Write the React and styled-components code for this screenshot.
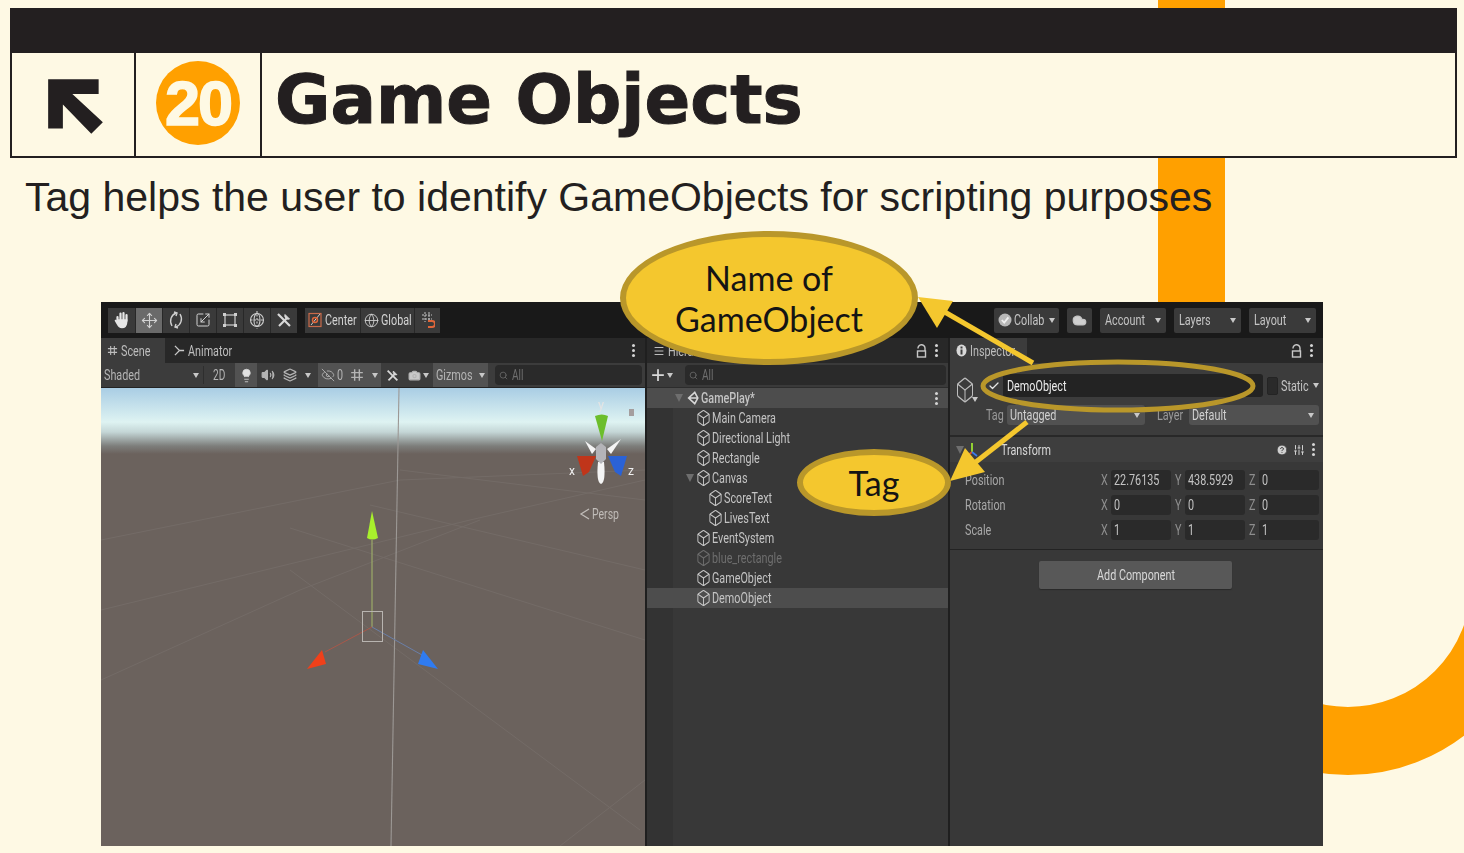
import React from "react";
import styled, { createGlobalStyle } from "styled-components";
import { Box, Camera, Check, Cloud, EyeOff, Globe, CircleHelp, Layers, Lightbulb, Menu, Move, Scaling, Search, SlidersVertical, Volume2 } from "lucide-react";

const GlobalStyle = createGlobalStyle`
  html, body {
    margin: 0;
    padding: 0;
    background: #fef9e4;
  }
`;

const uiFont = `Roboto, "Liberation Sans", sans-serif`;

const Page = styled.div`
  position: relative;
  width: 1464px;
  height: 853px;
  overflow: hidden;
  padding-top: 8px;
  box-sizing: border-box;
  background: #fef9e4;
  font-family: "Liberation Sans", Arial, sans-serif;
`;

const OrangeStrip = styled.div`
  position: absolute;
  left: 1158px;
  top: 0;
  width: 67px;
  height: 310px;
  background: #ffa000;
`;

const OrangeArc = styled.div`
  position: absolute;
  left: 1157px;
  top: 393px;
  width: 382px;
  height: 382px;
  box-sizing: border-box;
  border: 68px solid #ffa000;
  border-radius: 50%;
  clip-path: inset(50% 0 0 0);
`;

const Header = styled.header`
  position: relative;
  margin: 0 7px 0 10px;
  height: 150px;
  box-sizing: border-box;
  border: 2px solid #231f20;
  background: #fef9e4;
  display: flex;
  flex-direction: column;
`;

const HeaderBar = styled.div`
  height: 43px;
  flex: none;
  background: #231f20;
`;

const HeaderRow = styled.div`
  flex: 1;
  display: flex;
`;

const HeaderCell = styled.div`
  width: ${(p) => p.$w}px;
  flex: none;
  box-sizing: border-box;
  border-right: 2px solid #231f20;
  padding: ${(p) => p.$pad ?? "0 0 3px 0"};
  display: flex;
  align-items: center;
  justify-content: center;
`;

const NumberBadge = styled.div`
  width: 84px;
  height: 84px;
  border-radius: 50%;
  background: #ffa000;
  color: #fef9e4;
  font-size: 63px;
  font-weight: 700;
  letter-spacing: -2px;
  -webkit-text-stroke: 1.5px #fef9e4;
  display: flex;
  align-items: center;
  justify-content: center;
`;

const Title = styled.h1`
  margin: 3px 0 0 13px;
  font-family: "DejaVu Sans", sans-serif;
  font-size: 67.5px;
  line-height: 88px;
  font-weight: 700;
  color: #231f20;
  -webkit-text-stroke: 1px #231f20;
`;

const Subtitle = styled.p`
  position: relative;
  margin: 15px 0 0 25px;
  font-size: 41px;
  line-height: 48px;
  color: #231f20;
`;

const Editor = styled.section`
  position: relative;
  margin: 81px 0 0 101px;
  width: 1222px;
  height: 544px;
  background: #383838;
  display: flex;
  flex-direction: column;
  font-family: ${uiFont};
  font-size: 15px;
  color: #c4c4c4;
  filter: blur(0.45px);
  & svg {
    flex: none;
  }
`;

// the editor capture is squeezed sideways, no narrow font is installed so the
// labels are narrowed here. $w is the width they take in the row afterwards
const Label = styled.span`
  display: inline-block;
  flex: none;
  white-space: nowrap;
  width: ${(p) => (p.$w ? `${p.$w}px` : "auto")};
  transform: scaleX(0.72);
  transform-origin: left center;
`;

const Toolbar = styled.div`
  height: 36px;
  flex: none;
  background: #191919;
  display: flex;
  align-items: center;
  padding: 0 7px;
  box-sizing: border-box;
`;

const ToolGroup = styled.div`
  display: flex;
  margin-right: ${(p) => p.$gap ?? 8}px;
`;

const ToolButton = styled.div`
  width: ${(p) => p.$w ?? 27}px;
  height: 25px;
  box-sizing: border-box;
  background: ${(p) => (p.$on ? "#6a6a6a" : "#3a3a3a")};
  color: #d2d2d2;
  display: flex;
  align-items: center;
  justify-content: center;
  gap: 2px;
  font-size: 15px;
  & + & {
    border-left: 1px solid #282828;
  }
`;

const ToolbarRight = styled.div`
  margin-left: auto;
  display: flex;
  gap: 8px;
`;

const MenuButton = styled.div`
  width: ${(p) => p.$w}px;
  height: 25px;
  box-sizing: border-box;
  background: #3a3a3a;
  border-radius: 2px;
  padding: 0 5px;
  display: flex;
  align-items: center;
  justify-content: ${(p) => (p.$center ? "center" : "space-between")};
  gap: 2px;
  color: #c4c4c4;
`;

const Columns = styled.div`
  flex: 1;
  display: flex;
  min-height: 0;
`;

const Column = styled.div`
  width: ${(p) => p.$w}px;
  flex: none;
  display: flex;
  flex-direction: column;
  box-sizing: border-box;
  border-left: ${(p) => (p.$line ? "2px solid #1f1f1f" : "none")};
`;

const TabRow = styled.div`
  height: 25px;
  flex: none;
  background: #282828;
  display: flex;
  align-items: stretch;
  color: #bdbdbd;
  padding-right: 8px;
`;

const Tab = styled.div`
  width: ${(p) => p.$w}px;
  box-sizing: border-box;
  padding-left: ${(p) => p.$pad ?? 6}px;
  background: ${(p) => (p.$on ? "#3c3c3c" : "transparent")};
  display: flex;
  align-items: center;
  gap: 3px;
  white-space: nowrap;
  overflow: hidden;
`;

const TabEnd = styled.div`
  margin-left: auto;
  display: flex;
  align-items: center;
  gap: 6px;
`;

const Dots = styled.span`
  width: 3px;
  height: 3px;
  border-radius: 50%;
  background: #d4d4d4;
  box-shadow: 0 -5px 0 #d4d4d4, 0 5px 0 #d4d4d4;
  margin: 0 2px;
`;

const Caret = styled.span`
  width: 0;
  height: 0;
  flex: none;
  border-left: 3.5px solid transparent;
  border-right: 3.5px solid transparent;
  border-top: 5px solid ${(p) => p.$color ?? "#c8c8c8"};
  margin-left: ${(p) => p.$left ?? 0}px;
`;

const SceneBar = styled.div`
  height: 25px;
  flex: none;
  background: #3c3c3c;
  display: flex;
  align-items: center;
  color: #b4b4b4;
  border-bottom: 1px solid #232323;
  box-sizing: border-box;
`;

const ShadedSelect = styled.div`
  width: 103px;
  padding: 0 4px 0 3px;
  box-sizing: border-box;
  display: flex;
  justify-content: space-between;
  align-items: center;
  border-right: 1px solid #2e2e2e;
`;

const SceneItem = styled.div`
  width: ${(p) => p.$w}px;
  height: 24px;
  flex: none;
  margin-left: ${(p) => p.$ml ?? 0}px;
  background: ${(p) => (p.$on ? "#525252" : "transparent")};
  display: flex;
  align-items: center;
  justify-content: center;
  gap: 2px;
  color: ${(p) => (p.$bright ? "#d8d8d8" : "#b4b4b4")};
  font-size: ${(p) => p.$fs ?? 15}px;
`;

const SearchField = styled.div`
  flex: 1;
  height: 20px;
  margin: ${(p) => p.$m ?? "0 3px 0 7px"};
  background: #2a2a2a;
  border-radius: 4px;
  display: flex;
  align-items: center;
  gap: 4px;
  padding-left: 4px;
  color: #6f6f6f;
  font-size: 14px;
`;

const Viewport = styled.div`
  flex: 1;
  min-height: 0;
  background: linear-gradient(
    #a9cde4 0,
    #def3f2 34px,
    #c4d6d6 44px,
    #7d7e7b 58px,
    #6b625d 66px,
    #6b625d 100%
  );
`;

const ViewportArt = styled.svg`
  display: block;
  width: 100%;
  height: 100%;
`;

const HierarchyTools = styled.div`
  height: 25px;
  flex: none;
  background: #3a3a3a;
  border-bottom: 1px solid #2c2c2c;
  box-sizing: border-box;
  display: flex;
  align-items: center;
  padding-left: 4px;
  color: #d8d8d8;
`;

const PlusSign = styled.span`
  font-family: "Liberation Sans", sans-serif;
  font-size: 24px;
  line-height: 20px;
`;

const TreeBody = styled.div`
  flex: 1;
  background: linear-gradient(to right, #333333 26px, #383838 26px);
`;

const TreeRow = styled.div`
  height: 20px;
  display: flex;
  align-items: center;
  box-sizing: border-box;
  padding-left: ${(p) => p.$indent}px;
  padding-right: 8px;
  gap: 1px;
  background: ${(p) => (p.$on ? "#4d4d4d" : "transparent")};
  color: ${(p) => (p.$dim ? "#6e6e6e" : "#c4c4c4")};
  font-weight: ${(p) => (p.$bold ? 500 : 400)};
  font-size: 15px;
`;

const TreeCaret = styled.span`
  width: 0;
  height: 0;
  flex: none;
  border-left: 4px solid transparent;
  border-right: 4px solid transparent;
  border-top: 8px solid #6e6e6e;
  margin-right: ${(p) => p.$mr ?? 0}px;
`;

const InspectorHead = styled.div`
  height: 74px;
  flex: none;
  background: #3c3c3c;
  border-bottom: 2px solid #282828;
  box-sizing: border-box;
  display: grid;
  grid-template-columns: 36px 1fr;
  padding: 11px 4px 0 0;
`;

const BigCube = styled.div`
  position: relative;
  padding: 2px 0 0 5px;
  color: #bdbdbd;
  & > span {
    position: absolute;
    left: 22px;
    top: 28px;
  }
`;

const HeadLines = styled.div`
  display: flex;
  flex-direction: column;
  gap: 8px;
`;

const HeadLine = styled.div`
  display: flex;
  align-items: center;
  height: ${(p) => p.$h}px;
`;

const CheckSlot = styled.div`
  width: 15px;
  margin-left: 2px;
  color: #e6e6e6;
  display: flex;
  align-items: center;
`;

const NameField = styled.div`
  width: 260px;
  height: 23px;
  background: #232323;
  border-radius: 3px;
  color: #ececec;
  padding-left: 4px;
  box-sizing: border-box;
  display: flex;
  align-items: center;
`;

const StaticBox = styled.span`
  width: 11px;
  height: 18px;
  margin: 0 3px 0 4px;
  background: #2a2a2a;
  border: 1px solid #242424;
  border-radius: 2px;
  box-sizing: border-box;
`;

const FieldLabel = styled.span`
  color: #9a9a9a;
  width: ${(p) => p.$w}px;
  margin-left: ${(p) => p.$ml ?? 0}px;
  flex: none;
`;

const Dropdown = styled.div`
  width: ${(p) => p.$w}px;
  height: 20px;
  flex: none;
  background: #515151;
  border-radius: 3px;
  box-sizing: border-box;
  padding: 0 5px 0 3px;
  display: flex;
  align-items: center;
  justify-content: space-between;
  color: #d0d0d0;
`;

const ComponentHead = styled.div`
  height: 25px;
  flex: none;
  background: #3e3e3e;
  display: flex;
  align-items: center;
  padding: 0 6px 0 6px;
  color: #d8d8d8;
`;

const ComponentName = styled.span`
  margin-left: 21px;
`;

const HeadIcons = styled.div`
  margin-left: auto;
  display: flex;
  align-items: center;
  gap: 5px;
  color: #d0d0d0;
`;

const TransformGrid = styled.div`
  padding: 8px 4px 9px 15px;
  display: flex;
  flex-direction: column;
  gap: 5px;
  border-bottom: 1px solid #232323;
`;

const TransformRow = styled.div`
  display: flex;
  align-items: center;
  height: 20px;
  color: #a8a8a8;
`;

const RowLabel = styled.span`
  width: 136px;
  flex: none;
`;

const AxisField = styled.div`
  display: flex;
  align-items: center;
  width: 74px;
  flex: none;
  color: #8e8e8e;
`;

const AxisLetter = styled.span`
  width: 10px;
  flex: none;
`;

const AxisValue = styled.div`
  width: 60px;
  height: 20px;
  background: #2a2a2a;
  border-radius: 3px;
  padding-left: 3px;
  box-sizing: border-box;
  display: flex;
  align-items: center;
  color: #c4c4c4;
`;

const AddRow = styled.div`
  display: flex;
  justify-content: center;
  padding: 11px 2px 0 0;
`;

const AddButton = styled.div`
  width: 193px;
  height: 28px;
  background: #585858;
  border-radius: 2px;
  display: flex;
  align-items: center;
  justify-content: center;
  color: #d8d8d8;
  box-shadow: 0 1px 1px #2a2a2a;
`;

const Annotations = styled.svg`
  position: absolute;
  left: 0;
  top: 0;
  pointer-events: none;
`;

const Callout = styled.div`
  position: absolute;
  left: ${(p) => p.$x}px;
  top: ${(p) => p.$y}px;
  width: ${(p) => p.$w}px;
  height: ${(p) => p.$h}px;
  box-sizing: border-box;
  border: 6px solid #b9972a;
  border-radius: 50%;
  background: #f4c72e;
  color: #141414;
  font-family: Lato, "Noto Sans", sans-serif;
  font-size: 34px;
  line-height: 41px;
  text-align: center;
  display: flex;
  align-items: center;
  justify-content: center;
`;

const Small = styled.svg`
  flex: none;
  display: block;
`;

const HandIcon = () => (
  <Small width="16" height="18" viewBox="0 0 16 18" fill="none" stroke="#e6e6e6" strokeWidth="2.2" strokeLinecap="round">
    <path d="M3.5 6 V10 M6.5 2.5 V9 M9.5 2 V9 M12.5 4 V10" />
    <path d="M3.5 9 H12.5 V12 Q12 16.5 8 16.5 Q5 16.5 3.5 13 L1.5 9.5" fill="#e6e6e6" strokeWidth="1.6" />
  </Small>
);

const RotateIcon = () => (
  <Small width="16" height="18" viewBox="0 0 16 18" fill="none" stroke="#cfcfcf" strokeWidth="1.4">
    <path d="M8 2 C3 4 1 10 4 15" />
    <path d="M8 16 C13 14 15 8 12 3" />
    <path d="M6 1 L9 2 L8 5 M10 17 L7 16 L8 13" />
  </Small>
);

const RectIcon = () => (
  <Small width="16" height="16" viewBox="0 0 16 16" fill="none" stroke="#cfcfcf" strokeWidth="1.2">
    <rect x="3" y="3" width="10" height="10" />
    <path d="M1 1h3v3H1zM12 1h3v3h-3zM1 12h3v3H1zM12 12h3v3h-3z" fill="#cfcfcf" stroke="none" />
  </Small>
);

const TransformIcon = () => (
  <Small width="18" height="20" viewBox="0 0 18 20" fill="none" stroke="#cfcfcf" strokeWidth="1.1">
    <circle cx="9" cy="10" r="6.5" />
    <ellipse cx="9" cy="10" rx="3" ry="6.5" />
    <path d="M2.5 10h13M9 1v18" strokeDasharray="2 1.5" />
  </Small>
);

// crossed wrench and screwdriver
const ToolsIcon = ({ size = 16 }) => (
  <Small width={size} height={size} viewBox="0 0 16 16" fill="none" stroke="#d8d8d8" strokeWidth="2.2">
    <path d="M2 2 L14 14" />
    <path d="M3 14 L11 6" />
    <path d="M9 2.5 A3.5 3.5 0 0 0 13.5 7 L11.5 5 Z" fill="#d8d8d8" strokeWidth="1" />
  </Small>
);

const CenterIcon = () => (
  <Small width="15" height="16" viewBox="0 0 15 16" fill="none">
    <rect x="1" y="1.5" width="12" height="13" stroke="#c86a4a" strokeWidth="1.2" />
    <path d="M3 13 L12 2" stroke="#cfcfcf" strokeWidth="1" />
    <circle cx="7" cy="8" r="2.5" stroke="#e0663a" strokeWidth="1.4" />
  </Small>
);

const SnapIcon = () => (
  <Small width="14" height="18" viewBox="0 0 14 18" fill="none" stroke="#c4c4c4" strokeWidth="1">
    <path d="M1 4h10M1 8h10M4 1v10M8 1v10" strokeDasharray="2 1" />
    <path d="M7 10h4a2.5 2.5 0 0 1 0 6H7" stroke="#e0663a" strokeWidth="2" />
  </Small>
);

const GridIcon = ({ size = 11 }) => (
  <Small width={size} height={size} viewBox="0 0 12 12" fill="none" stroke="currentColor" strokeWidth="1.2">
    <path d="M1 4h10M1 8h10M4 1v10M8 1v10" />
  </Small>
);

const AnimatorIcon = () => (
  <Small width="11" height="11" viewBox="0 0 12 12" fill="none" stroke="#c8c8c8" strokeWidth="1.4">
    <path d="M1 1 L6 6 L1 11 M6 6 H11" />
  </Small>
);

const UnityIcon = () => (
  <Small width="14" height="14" viewBox="0 0 16 16" fill="none" stroke="#d8d8d8" strokeWidth="1.8">
    <path d="M10 1.5 L3 8 L10 14.5 L13.5 8 Z M3 8 H13.5" />
  </Small>
);

const AxesIcon = () => (
  <Small width="16" height="18" viewBox="0 0 16 18" fill="none" strokeWidth="1.8">
    <path d="M8 11 V2" stroke="#9ce032" />
    <path d="M8 11 L3 15" stroke="#e0502a" />
    <path d="M8 11 L13 15" stroke="#3b7bea" />
  </Small>
);

const CollabIcon = () => (
  <Small width="14" height="14" viewBox="0 0 14 14" fill="none">
    <circle cx="7" cy="7" r="6.5" fill="#b8b8b8" />
    <path d="M3.8 7 L6.2 9.6 L10.4 4.4" stroke="#f0f0f0" strokeWidth="1.8" />
  </Small>
);

const InfoIcon = () => (
  <Small width="11" height="13" viewBox="0 0 11 13">
    <ellipse cx="5.5" cy="6.5" rx="5" ry="6" fill="#d8d8d8" />
    <rect x="4.5" y="5.5" width="2" height="5" fill="#3c3c3c" />
    <rect x="4.5" y="2.5" width="2" height="2" fill="#3c3c3c" />
  </Small>
);

// open padlock as the Unity tabs show it, reads almost like an "a"
const LockIcon = () => (
  <Small width="11" height="14" viewBox="0 0 11 14" fill="none" stroke="#c8c8c8" strokeWidth="1.4">
    <path d="M2 4.5 A3.3 3.3 0 0 1 9 4 V7" />
    <rect x="1.5" y="7" width="8" height="6" />
  </Small>
);

const Cube = ({ dim }) => (
  <Box width={15} height={18} preserveAspectRatio="none" strokeWidth={1.5} color={dim ? "#6e6e6e" : "#c8c8c8"} />
);

const treeItems = [
  { name: "Main Camera", indent: 49 },
  { name: "Directional Light", indent: 49 },
  { name: "Rectangle", indent: 49 },
  { name: "Canvas", indent: 39, open: true },
  { name: "ScoreText", indent: 61 },
  { name: "LivesText", indent: 61 },
  { name: "EventSystem", indent: 49 },
  { name: "blue_rectangle", indent: 49, dim: true },
  { name: "GameObject", indent: 49 },
  { name: "DemoObject", indent: 49, on: true },
];

const transformRows = [
  { label: "Position", values: ["22.76135", "438.5929", "0"] },
  { label: "Rotation", values: ["0", "0", "0"] },
  { label: "Scale", values: ["1", "1", "1"] },
];

const axes = ["X", "Y", "Z"];

// Scene view drawing, in page coordinates so it lines up with the reference
const SceneArt = () => (
  <ViewportArt viewBox="101 388 544 458" xmlns="http://www.w3.org/2000/svg">
    <g stroke="#7d7672" strokeWidth="1" fill="none" opacity="0.45">
      <path d="M101 540 L400 480 L645 470" />
      <path d="M101 610 L470 520 L645 480" />
      <path d="M290 528 L645 640" />
      <path d="M370 505 L645 570" />
      <path d="M290 570 L640 830" />
      <path d="M101 680 L300 590 L480 520" />
      <path d="M400 470 L645 500" />
      <path d="M560 846 L645 780" />
    </g>
    <line x1="399" y1="388" x2="391" y2="846" stroke="#9c9895" strokeWidth="1.1" />

    {/* move handles */}
    <line x1="372" y1="540" x2="372" y2="627" stroke="#a5b86a" />
    <line x1="372" y1="627" x2="325" y2="652" stroke="#a8584a" />
    <line x1="372" y1="627" x2="422" y2="655" stroke="#6a7fa8" />
    <rect x="362.5" y="611.5" width="20" height="30" fill="none" stroke="#b8b4b0" />
    <path d="M372 511 L378 538 Q372 541 367 538 Z" fill="#a8f02c" />
    <path d="M307 669 L322 650 L326 664 Z" fill="#f0401a" />
    <path d="M438 669 L423 650 L418 664 Z" fill="#2f7bf0" />

    {/* orientation gizmo */}
    <path d="M585 441 L596 449 L592 454 Z" fill="#f4f4f4" />
    <path d="M621 439 L607 449 L611 454 Z" fill="#f4f4f4" />
    <path d="M601 484 Q596 482 598 462 L604 462 Q606 482 601 484 Z" fill="#f4f4f4" />
    <path d="M601 443 L606 447 L606 459 L601 464 L596 459 L596 447 Z" fill="#b4b4b8" />
    <path d="M602 441 L595 416 Q602 413 608 416 Z" fill="#6cbe2c" />
    <path d="M596 456 L577 456 L583 476 L589 472 Z" fill="#c0351a" />
    <path d="M608 456 L627 456 L621 476 L615 472 Z" fill="#2a62d6" />
    <rect x="629" y="409" width="5" height="7" fill="#a49e9e" />
    <text x="601" y="409" fill="#e4e4e4" fontSize="13" textAnchor="middle">y</text>
    <text x="572" y="475" fill="#f0f0f0" fontSize="12" textAnchor="middle">x</text>
    <text x="631" y="475" fill="#f0f0f0" fontSize="12" textAnchor="middle">z</text>
    <path d="M589 509 L581 514 L589 519" fill="none" stroke="#c0bcb8" strokeWidth="1.3" />
    <text x="592" y="519" fill="#c0bcb8" fontSize="15" textLength="27" lengthAdjust="spacingAndGlyphs">Persp</text>
  </ViewportArt>
);

export default function App() {
  return (
    <Page>
      <GlobalStyle />
      <OrangeStrip />
      <OrangeArc />
      <Header>
        <HeaderBar />
        <HeaderRow>
          <HeaderCell $w={124} $pad="3px 0 0 5px">
            <svg width="61" height="61" viewBox="0 0 58 58">
              <path d="M3 3 H51 V17 H26 L55 44 L44 55 L17 27 V50 H3 Z" fill="#231f20" />
            </svg>
          </HeaderCell>
          <HeaderCell $w={126}>
            <NumberBadge>20</NumberBadge>
          </HeaderCell>
          <Title>Game Objects</Title>
        </HeaderRow>
      </Header>
      <Subtitle>Tag helps the user to identify GameObjects for scripting purposes</Subtitle>

      <Editor>
        <Toolbar>
          <ToolGroup>
            <ToolButton><HandIcon /></ToolButton>
            <ToolButton $on><Move size={17} strokeWidth={1.5} /></ToolButton>
            <ToolButton><RotateIcon /></ToolButton>
            <ToolButton><Scaling size={16} strokeWidth={1.5} /></ToolButton>
            <ToolButton><RectIcon /></ToolButton>
            <ToolButton><TransformIcon /></ToolButton>
            <ToolButton><ToolsIcon /></ToolButton>
          </ToolGroup>
          <ToolGroup $gap={0}>
            <ToolButton $w={55}><CenterIcon /><Label $w={33}>Center</Label></ToolButton>
            <ToolButton $w={54}><Globe size={15} strokeWidth={1.4} /><Label $w={31}>Global</Label></ToolButton>
            <ToolButton $w={26}><SnapIcon /></ToolButton>
          </ToolGroup>
          <ToolbarRight>
            <MenuButton $w={65} $center><CollabIcon /><Label $w={33}>Collab</Label><Caret /></MenuButton>
            <MenuButton $w={25} $center><Cloud size={15} fill="#d0d0d0" /></MenuButton>
            <MenuButton $w={66}><Label $w={40}>Account</Label><Caret /></MenuButton>
            <MenuButton $w={67}><Label $w={33}>Layers</Label><Caret /></MenuButton>
            <MenuButton $w={67}><Label $w={34}>Layout</Label><Caret /></MenuButton>
          </ToolbarRight>
        </Toolbar>

        <Columns>
          <Column $w={544}>
            <TabRow>
              <Tab $w={64} $on><GridIcon /><Label>Scene</Label></Tab>
              <Tab $w={90} $pad={9}><AnimatorIcon /><Label>Animator</Label></Tab>
              <TabEnd><Dots /></TabEnd>
            </TabRow>
            <SceneBar>
              <ShadedSelect><Label $w={38}>Shaded</Label><Caret /></ShadedSelect>
              <SceneItem $w={29} $fs={14}><Label $w={12}>2D</Label></SceneItem>
              <SceneItem $w={22} $ml={2} $on $bright><Lightbulb size={15} fill="#e0e0e0" strokeWidth={1.3} /></SceneItem>
              <SceneItem $w={22}><Volume2 size={14} fill="#b4b4b4" /></SceneItem>
              <SceneItem $w={21}><Layers size={14} strokeWidth={2.2} /></SceneItem>
              <SceneItem $w={16}><Caret /></SceneItem>
              <SceneItem $w={28} $ml={2} $on><EyeOff size={14} strokeWidth={1.5} /><Label $w={7}>0</Label></SceneItem>
              <SceneItem $w={35} $on><GridIcon size={14} /><Caret $left={6} /></SceneItem>
              <SceneItem $w={22}><ToolsIcon size={13} /></SceneItem>
              <SceneItem $w={30}><Camera size={13} fill="#c8c8c8" /><Caret /></SceneItem>
              <SceneItem $w={55} $on><Label $w={37}>Gizmos</Label><Caret $left={4} /></SceneItem>
              <SearchField><Search size={9} /><Label>All</Label></SearchField>
            </SceneBar>
            <Viewport><SceneArt /></Viewport>
          </Column>

          <Column $w={303} $line>
            <TabRow>
              <Tab $w={80} $pad={6}><Menu size={12} /><Label>Hierarchy</Label></Tab>
              <TabEnd><LockIcon /><Dots /></TabEnd>
            </TabRow>
            <HierarchyTools>
              <PlusSign>+</PlusSign>
              <Caret $left={2} />
              <SearchField $m="0 2px 0 12px"><Search size={9} /><Label>All</Label></SearchField>
            </HierarchyTools>
            <TreeBody>
              <TreeRow $indent={28} $on $bold>
                <TreeCaret $mr={2} /><UnityIcon /><Label $w={56}>GamePlay*</Label>
                <TabEnd><Dots /></TabEnd>
              </TreeRow>
              {treeItems.map((item) => (
                <TreeRow key={item.name} $indent={item.indent} $on={item.on} $dim={item.dim}>
                  {item.open && <TreeCaret $mr={1} />}
                  <Cube dim={item.dim} />
                  <Label>{item.name}</Label>
                </TreeRow>
              ))}
            </TreeBody>
          </Column>

          <Column $w={375} $line>
            <TabRow>
              <Tab $w={77} $on><InfoIcon /><Label>Inspector</Label></Tab>
              <TabEnd><LockIcon /><Dots /></TabEnd>
            </TabRow>
            <InspectorHead>
              <BigCube><Box width={20} height={28} preserveAspectRatio="none" strokeWidth={1.2} /><span><Caret /></span></BigCube>
              <HeadLines>
                <HeadLine $h={23}>
                  <CheckSlot><Check size={12} strokeWidth={2.5} /></CheckSlot>
                  <NameField><Label>DemoObject</Label></NameField>
                  <StaticBox />
                  <Label $w={31}>Static</Label><Caret $left={1} />
                </HeadLine>
                <HeadLine $h={20}>
                  <FieldLabel $w={21}><Label>Tag</Label></FieldLabel>
                  <Dropdown $w={138}><Label $w={48}>Untagged</Label><Caret /></Dropdown>
                  <FieldLabel $w={32} $ml={12}><Label>Layer</Label></FieldLabel>
                  <Dropdown $w={130}><Label $w={36}>Default</Label><Caret /></Dropdown>
                </HeadLine>
              </HeadLines>
            </InspectorHead>
            <ComponentHead>
              <TreeCaret />
              <AxesIcon />
              <ComponentName><Label>Transform</Label></ComponentName>
              <HeadIcons>
                <CircleHelp size={12} fill="#d0d0d0" color="#3e3e3e" />
                <SlidersVertical size={12} />
                <Dots />
              </HeadIcons>
            </ComponentHead>
            <TransformGrid>
              {transformRows.map((row) => (
                <TransformRow key={row.label}>
                  <RowLabel><Label>{row.label}</Label></RowLabel>
                  {row.values.map((v, i) => (
                    <AxisField key={axes[i]}>
                      <AxisLetter><Label>{axes[i]}</Label></AxisLetter>
                      <AxisValue><Label>{v}</Label></AxisValue>
                    </AxisField>
                  ))}
                </TransformRow>
              ))}
            </TransformGrid>
            <AddRow><AddButton><Label $w={77}>Add Component</Label></AddButton></AddRow>
          </Column>
        </Columns>
      </Editor>

      <Annotations width="1464" height="853" viewBox="0 0 1464 853">
        <line x1="1033" y1="363" x2="943" y2="311" stroke="#f4c72e" strokeWidth="5" />
        <path d="M918 297 L953 301 L937 328 Z" fill="#f4c72e" />
        <line x1="1027" y1="422" x2="972" y2="465" stroke="#f4c72e" strokeWidth="5" />
        <path d="M950 481 L965 448 L985 472 Z" fill="#f4c72e" />
        <ellipse cx="1118" cy="386" rx="135" ry="24" fill="none" stroke="#b9972a" strokeWidth="5" />
      </Annotations>

      <Callout $x={620} $y={231} $w={298} $h={134}>Name of<br />GameObject</Callout>
      <Callout $x={797} $y={449} $w={154} $h={67}>Tag</Callout>
    </Page>
  );
}
